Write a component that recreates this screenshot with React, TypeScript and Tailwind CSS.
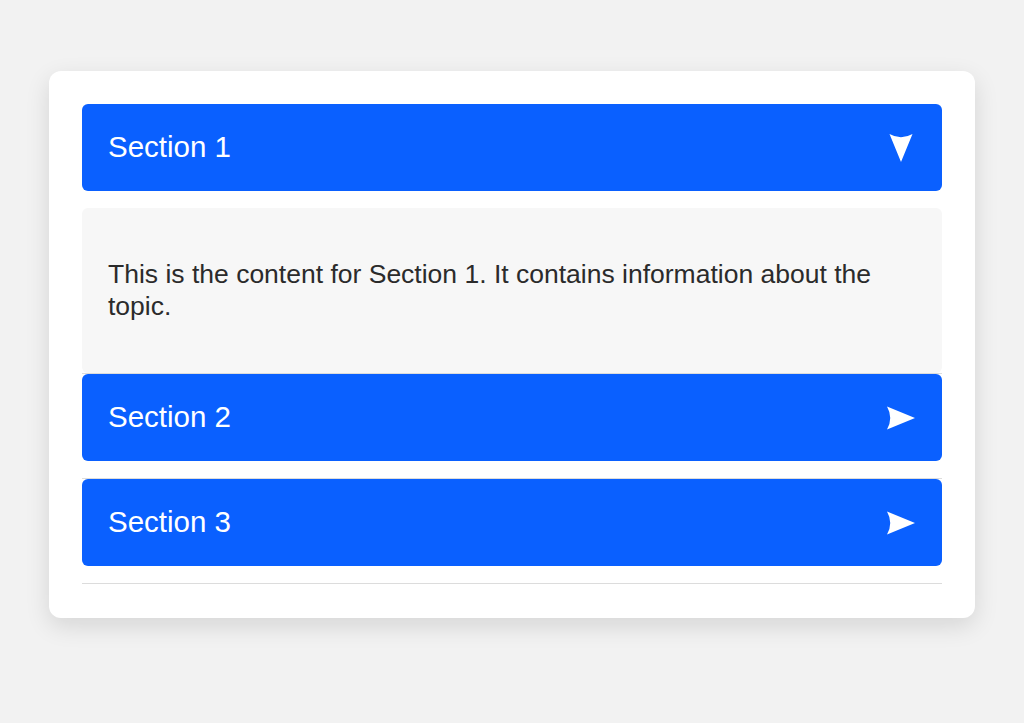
import React, { useState } from "react";

const sections = [
  { title: "Section 1", body: "This is the content for Section 1. It contains information about the topic." },
  { title: "Section 2", body: "This is the content for Section 2. It contains information about the topic." },
  { title: "Section 3", body: "This is the content for Section 3. It contains information about the topic." },
];

const Arrow: React.FC<{ open: boolean }> = ({ open }) => (
  <svg
    width="30"
    height="26"
    viewBox="0 0 30 26"
    className={open ? "rotate-90" : ""}
    aria-hidden="true"
  >
    <path d="M1 1.5 L29 13 L1 24.5 Q7.5 13 1 1.5 Z" fill="#ffffff" />
  </svg>
);

export default function App() {
  const [open, setOpen] = useState<number | null>(0);

  return (
    <div
      className="min-h-screen bg-[#f2f2f2] pt-[71px] px-[49px]"
      style={{ fontFamily: '"Liberation Sans", Arial, sans-serif' }}
    >
      <div className="w-[926px] bg-white rounded-xl px-[33px] pt-[33px] pb-[34px] shadow-[0_8px_24px_rgba(0,0,0,0.12)]">
        {sections.map((s, i) => (
          <div key={s.title} className="border-b border-[#dcdcdc]">
            <button
              onClick={() => setOpen(open === i ? null : i)}
              className="w-full h-[87px] mb-[17px] flex items-center justify-between px-[26px] bg-[#0a60ff] rounded-md text-white text-[29.5px] text-left"
            >
              <span>{s.title}</span>
              <Arrow open={open === i} />
            </button>
            {open === i && (
              <div className="bg-[#f7f7f7] rounded-md px-[26px] pt-[50px] pb-[51px] text-[26.5px] leading-[32px] text-[#2b2b2b]">
                {s.body}
              </div>
            )}
          </div>
        ))}
      </div>
    </div>
  );
}
